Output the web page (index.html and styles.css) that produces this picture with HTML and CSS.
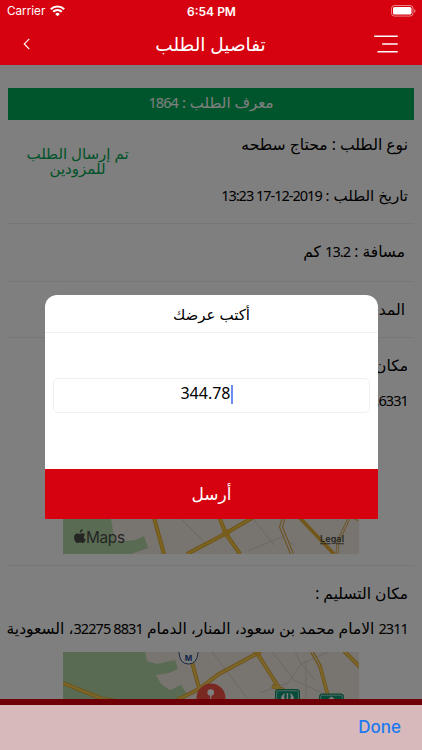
FILE: index.html
```html
<!DOCTYPE html>
<html lang="ar" dir="rtl">
<head>
    <meta charset="UTF-8">
    <title>تفاصيل الطلب</title>
    <meta name="viewport" content="width=device-width,initial-scale=1">
    <link rel="stylesheet" href="styles.css">
</head>
<body>
<div class="screen">
    <header class="header">
        <div class="status-bar">
            <div class="carrier">
                <span>Carrier</span>
                <svg width="15" height="12" viewBox="0 0 15 12" fill="none" stroke="#fff" stroke-width="2.1">
                    <path d="M.8 4.2a9.5 9.5 0 0 1 13.4 0"/>
                    <path d="M3.2 6.8a6 6 0 0 1 8.6 0"/>
                    <path d="M7.5 11.2 5.2 8.9a3.3 3.3 0 0 1 4.6 0z" fill="#fff" stroke="none"/>
                </svg>
            </div>
            <span class="time">6:54 PM</span>
            <svg class="battery" width="25" height="12" viewBox="0 0 25 12">
                <rect x=".5" y=".5" width="21.5" height="10.6" rx="3" fill="none" stroke="#fff" stroke-opacity=".5"/>
                <rect x="2" y="2" width="18.5" height="7.6" rx="1.6" fill="#fff"/>
                <path d="M23.2 4v3.8q1.3-.6 1.3-1.9T23.2 4z" fill="#fff" fill-opacity=".5"/>
            </svg>
        </div>
        <div class="nav">
            <svg width="24" height="12" viewBox="0 0 24 12" fill="none" stroke="#fff" stroke-width="1.2"><path d="M6.3.8 1.3 5.9l5 5.2"/></svg>
            <h1>تفاصيل الطلب</h1>
            <svg width="24" height="18" viewBox="0 0 24 18" stroke="#fff" stroke-width="1.4"><path d="M.2 1.2h23.5M8.2 9h15.5M3.5 16.7h20.2"/></svg>
        </div>
    </header>

    <main class="content">
        <div class="order-id">معرف الطلب : <span class="num">1864</span></div>
        <section class="summary">
            <div class="info">
                <p class="type">نوع الطلب : محتاج سطحه</p>
                <p>تاريخ الطلب : <span class="num date"><bdi>17-12-2019</bdi> 13:23</span></p>
            </div>
            <div class="state">تم إرسال الطلب<br>للمزودين</div>
        </section>
        <section class="row distance">مسافة : <span class="num">13.2</span> كم</section>
        <section class="row duration">المد</section>
        <section class="place pickup">
            <p class="label">مكان</p>
            <p class="address"><span class="num">6331.</span></p>
            <div class="map">
                <svg width="296" height="130" viewBox="0 0 296 130">
                    <rect width="296" height="130" fill="#f0e8df"/>
                    <path d="M0 95h48l4 23 21-2 8-4 4 12-17 6H0z" fill="#b3d7a5"/>
                    <g fill="none" stroke="#d7d1c7" stroke-width="1">
                        <path d="M113 90l32 32M188 92l24 30M185 127l34-14 12 8M220 96v18"/>
                    </g>
                    <g fill="none" stroke="#dda42d" stroke-width="4">
                        <path d="M90 90l11 40M124 130l34-18 38-22M155 90l8 20 14 20"/>
                    </g>
                    <g fill="none" stroke="#f6c641" stroke-width="2.4">
                        <path d="M90 90l11 40M124 130l34-18 38-22M155 90l8 20 14 20"/>
                    </g>
                    <circle cx="163" cy="109" r="4" fill="#eeb93a"/>
                    <path d="M235 92l36 38" stroke="#e5ac31" stroke-width="3.5"/>
                    <path d="M222 90l-4 13 11 27" fill="none" stroke="#dba84e" stroke-width="4"/>
                    <path d="M222 90l-4 13 11 27" fill="none" stroke="#f0e8df" stroke-width="1.7"/>
                    <path d="M274 130l1-12 12-26 9 4" fill="none" stroke="#dba84e" stroke-width="3"/>
                    <path d="M274 130l1-12 12-26 9 4" fill="none" stroke="#f0e8df" stroke-width="1.2"/>
                    <g fill="#4a4d49">
                        <path d="M16.8 109.8c1.2 0 2-.7 3.1-.5 1 .1 1.8.5 2.3 1.2-2 1.3-1.7 4.2.5 5.1-.5 1.7-1.6 3.5-3.1 3.5-.9 0-1.3-.6-2.5-.6s-1.7.6-2.6.6c-2.8-.2-5-7.1-2-9.2 1.6-1 2.9-.1 4.3-.1z"/>
                        <path d="M16.7 108.8c-.1-2 1.3-3.5 3-3.7.2 1.8-1.2 3.5-3 3.7z"/>
                        <text x="23" y="118.8" font-size="15.3" textLength="39" class="map-text">Maps</text>
                        <text x="257" y="118.3" font-size="9" textLength="24" font-weight="600" text-decoration="underline" class="map-text">Legal</text>
                    </g>
                </svg>
            </div>
        </section>
        <section class="place delivery">
            <p class="label">مكان التسليم :</p>
            <p class="address"><span class="num">2311</span> الامام محمد بن سعود، المنار، الدمام <span class="num">8831 32275</span>، السعودية</p>
            <div class="map">
                <svg width="296" height="130" viewBox="0 0 296 130">
                    <rect width="296" height="130" fill="#f0e8df"/>
                    <path d="M0 0h82l2 9 10 3 18-4 3 9-9 4-13 2 5 9 9 6 11-5 6 9-5 9H0z" fill="#b3d7a5"/>
                    <g fill="none" stroke="#d7d1c7" stroke-width="1">
                        <path d="M149 0l35 46M209 0l22 28 30 14M265 0 238 12l-13 19-28 10M243 9v40M238 12l-6-12M252 28l-15-18"/>
                    </g>
                    <g fill="none" stroke="#dda42d" stroke-width="4">
                        <path d="M0 31l40 16 40 6M129 10l7 26M114 48l22-11 20-15 39-21M194 1l24 38M209 34l12 4M280-2l17 17"/>
                    </g>
                    <g fill="none" stroke="#f7ca50" stroke-width="2.4">
                        <path d="M0 31l40 16 40 6M129 10l7 26M114 48l22-11 20-15 39-21M194 1l24 38M209 34l12 4M280-2l17 17"/>
                    </g>
                    <path d="M190 0h9l-4 6z" fill="#eeb93a"/>
                    <path d="M249 0l8 14 8 30" fill="none" stroke="#dda42d" stroke-width="3.7"/>
                    <path d="M249 0l8 14" fill="none" stroke="#f0e8df" stroke-width="1.2"/>
                    <path d="M257 14l8 30" stroke="#f7ca50" stroke-width="2.3"/>
                    <path d="M116-1v2q1 11 9.5 11t9.5-11v-2z" fill="#f7f6f4" stroke="#37558f" stroke-width="1"/>
                    <text x="125.5" y="8.5" font-size="8" font-weight="bold" text-anchor="middle" fill="#274b96" class="map-text">M</text>
                    <circle cx="148" cy="46" r="14.5" fill="#f55245"/>
                    <circle cx="147.7" cy="40.5" r="3.3" fill="#fff"/>
                    <path d="M147.7 43v8" stroke="#fff" stroke-width="1.2"/>
                    <rect x="212.5" y="37.5" width="24" height="22" rx="2.5" fill="#0a9875" stroke="#148866"/>
                    <rect x="213.7" y="38.7" width="21.6" height="20" rx="1.5" fill="none" stroke="#e4f4ec" stroke-width=".7"/>
                    <path d="M218 47c0-3 2-5 4-6l-1 4 2 4h-5zM231 47c0-3-2-5-4-6l1 4-2 4h5zM223.7 41h1.5v8h-1.5z" fill="#fff"/>
                    <rect x="256.5" y="42" width="24" height="22" rx="2.5" fill="#0a9875" stroke="#148866"/>
                    <rect x="257.7" y="43.2" width="21.6" height="20" rx="1.5" fill="none" stroke="#e4f4ec" stroke-width=".7"/>
                    <path d="M264 48l4.5-3.5L273 48z" fill="#fff"/>
                </svg>
            </div>
        </section>
    </main>

    <!-- offer popup -->
    <div class="overlay">
        <div class="popup">
            <h2>أكتب عرضك</h2>
            <div class="popup-body">
                <div class="field"><span>344.78</span><i class="caret"></i></div>
            </div>
            <button class="send" type="button">أرسل</button>
        </div>
    </div>

    <!-- keyboard toolbar -->
    <div class="toolbar"><span class="done">Done</span></div>
</div>
</body>
</html>
```
FILE: styles.css
```css
*{
    padding: 0;
    margin: 0;
    box-sizing: border-box;
}
body{
    font-family: "Noto Sans","DejaVu Sans",sans-serif;
    font-size: 15px;
    color: #000;
    background-color: #fff;
    overflow: hidden;
}
svg{
    display: block;
}
.screen{
    position: relative;
    width: 422px;
    height: 750px;
    overflow: hidden;
}
.num{
    display: inline-block;
    font-size: 14.5px;
    letter-spacing: -0.9px;
}
.date{
    letter-spacing: -1px;
}

/* header */
.header{
    height: 65px;
    background-color: #d7020f;
    color: #fff;
    direction: ltr;
}
.status-bar{
    display: grid;
    grid-template-columns: 1fr auto 1fr;
    align-items: center;
    height: 22px;
    padding: 0 6px 0 7px;
    font-family: Inter,sans-serif;
    font-size: 11.7px;
}
.carrier{
    display: flex;
    align-items: center;
    gap: 5px;
}
.time{
    font-size: 12px;
    font-weight: 600;
}
.battery{
    justify-self: end;
}
.nav{
    display: flex;
    align-items: center;
    justify-content: space-between;
    height: 43px;
    padding: 0 24px 0 23px;
}
.nav h1{
    font-size: 18.5px;
    font-weight: 400;
    line-height: 43px;
}

/* order details */
.content{
    padding-top: 23px;
}
.order-id{
    height: 32px;
    margin: 0 8px;
    line-height: 29px;
    text-align: center;
    color: #fff;
    background-color: #00ab58;
}
.summary{
    display: flex;
    justify-content: space-between;
    height: 104px;
    margin: 0 8px;
    padding: 0 6px 0 18px;
    border-bottom: 1px solid #efeff4;
}
.info p{
    height: 51px;
    line-height: 49px;
}
.info .type{
    font-size: 15.6px;
}
.state{
    width: 103px;
    padding-top: 26px;
    text-align: center;
    white-space: nowrap;
    line-height: 15px;
    color: #00a651;
}
.row{
    margin: 0 8px;
    padding-right: 9px;
    border-bottom: 1px solid #efeff4;
}
.distance{
    height: 58px;
    line-height: 55px;
    font-size: 15.5px;
}
.duration{
    height: 56px;
    line-height: 54px;
    font-size: 15.5px;
}
.place{
    margin: 0 8px;
    padding: 0 6px 0 0;
}
.pickup{
    height: 228px;
    border-bottom: 1px solid #efeff4;
}
.label{
    height: 44px;
    line-height: 54px;
    font-size: 15.5px;
}
.address{
    height: 42px;
    line-height: 36px;
    white-space: nowrap;
}
.delivery .address{
    font-size: 15.5px;
}
.map{
    width: 296px;
    margin-right: 49px;
    direction: ltr;
}
.map-text{
    font-family: Inter,"Liberation Sans",sans-serif;
}

/* popup */
.overlay{
    position: absolute;
    top: 65px;
    left: 0;
    right: 0;
    bottom: 0;
    padding: 230px 44px 0 45px;
    background-color: rgba(0,0,0,0.5);
}
.popup{
    height: 224px;
    display: flex;
    flex-direction: column;
    background-color: #fff;
    border-radius: 12px 12px 0 0;
    overflow: hidden;
}
.popup h2{
    height: 38px;
    line-height: 38px;
    text-align: center;
    font-size: 15px;
    font-weight: 400;
    border-bottom: 1px solid #efeff4;
}
.popup-body{
    flex: 1;
    padding: 45px 8px 0;
}
.field{
    display: flex;
    justify-content: center;
    align-items: flex-start;
    height: 35px;
    padding-right: 10px;
    border: 1px solid #efeff4;
    border-radius: 5px;
    direction: ltr;
    font-size: 16px;
    line-height: 28px;
}
.caret{
    width: 2px;
    height: 19px;
    margin-top: 6px;
    background-color: #6b8cf0;
}
.send{
    height: 50px;
    border: none;
    color: #fff;
    background-color: #d7020f;
    font: inherit;
    font-size: 17px;
    line-height: 44px;
}

/* toolbar */
.toolbar{
    position: absolute;
    left: 0;
    right: 0;
    bottom: 0;
    height: 51px;
    padding: 0 21px;
    border-top: 6px solid #6f0008;
    background-color: #d8b9bb;
    direction: ltr;
    text-align: right;
    line-height: 45px;
}
.done{
    font-family: Inter,sans-serif;
    font-size: 17px;
    font-weight: 500;
    color: #2079ee;
}
```
